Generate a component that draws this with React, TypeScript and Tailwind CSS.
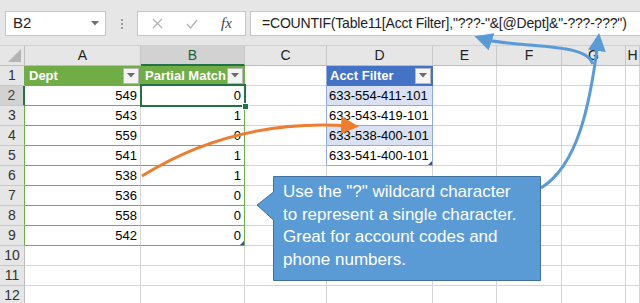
const widths = ["w-[25px]", "w-[116px]", "w-[104px]", "w-[82px]", "w-[106px]", "w-[64px]", "w-[65px]", "w-[64px]", "w-[14px]"];
const letters = ["", "A", "B", "C", "D", "E", "F", "G", "H"];

const dept = [549, 543, 559, 541, 538, 536, 558, 542];
const match = [0, 1, 0, 1, 1, 0, 0, 0];
const acct = ["633-554-411-101", "633-543-419-101", "633-538-400-101", "633-541-400-101"];

function FilterBtn() {
  return (
    <span className="flex items-center justify-center w-[16px] h-[16px] bg-[#f4f4f4] border border-[#b8b8b8] shrink-0">
      <svg width="8" height="5" viewBox="0 0 8 5">
        <path d="M0 0h8L4 4.5z" fill="#6b6b6b" />
      </svg>
    </span>
  );
}

function HeaderRow() {
  return (
    <div className="flex h-[20px]">
      {letters.map((l, i) => {
        if (i === 0)
          return (
            <div key={i} className={`${widths[0]} shrink-0 h-[20px] bg-[#e6e6e6] border-r border-b border-[#bdbdbd] flex items-end justify-end p-[3px]`}>
              <svg width="13" height="13" viewBox="0 0 13 13">
                <path d="M13 0V13H0z" fill="#b4b4b4" />
              </svg>
            </div>
          );
        const sel = i === 2;
        return (
          <div
            key={i}
            className={`${widths[i]} shrink-0 h-[20px] border-r border-[#c8c8c8] text-center text-[14px] leading-[19px] ${
              sel ? "bg-[#d2d2d2] border-b-2 border-b-[#217346] text-[#1e5c38]" : "bg-[#e6e6e6] border-b border-b-[#bdbdbd] text-[#222]"
            }`}
          >
            {l}
          </div>
        );
      })}
    </div>
  );
}

function Row({ r }: { r: number }) {
  const inTable = r >= 1 && r <= 9;
  const inD = r >= 1 && r <= 5;
  const d = r - 2;

  let aCls = "border-r-[#d4d4d4] border-b-[#d4d4d4]";
  let bCls = "border-r-[#d4d4d4] border-b-[#d4d4d4]";
  let dCls = "border-r-[#d4d4d4] border-b-[#d4d4d4]";
  let cCls = "border-r-[#d4d4d4] border-b-[#d4d4d4]";
  if (r === 1) {
    aCls = "bg-[#70ad47] border-r-[#70ad47] border-b-[#70ad47]";
    bCls = "bg-[#70ad47] border-r-[#70ad47] border-b-[#70ad47]";
    dCls = "bg-[#4472c4] border-r-[#4472c4] border-b-[#4472c4]";
  } else if (inTable) {
    aCls = "border-r-[#d4d4d4] border-b-[#70ad47]";
    bCls = "border-r-[#70ad47] border-b-[#70ad47]";
  }
  if (inD) {
    cCls = "border-r-[#8ea9db] border-b-[#d4d4d4]";
    if (r > 1) dCls = `border-r-[#8ea9db] border-b-[#8ea9db] ${r % 2 === 0 ? "bg-[#d9e1f2]" : "bg-white"}`;
  }

  const hdrSel = r === 2;
  const hdrCls = hdrSel
    ? "bg-[#d2d2d2] border-r-2 border-r-[#217346] text-[#444]"
    : inTable
    ? "bg-[#e6e6e6] border-r border-r-[#70ad47] text-[#333]"
    : "bg-[#e6e6e6] border-r border-r-[#bdbdbd] text-[#333]";

  return (
    <div className="flex h-[20px]">
      <div className={`${widths[0]} shrink-0 h-[20px] border-b border-b-[#c8c8c8] text-center text-[14px] leading-[19px] ${hdrCls}`}>{r}</div>
      <div className={`${widths[1]} shrink-0 h-[20px] border-r border-b text-[13px] leading-[19px] px-[3px] ${aCls} ${r === 1 ? "flex items-center justify-between text-white font-bold pl-[4px] pr-[1px]" : "text-right text-black"}`}>
        {r === 1 ? (
          <>
            <span>Dept</span>
            <FilterBtn />
          </>
        ) : inTable ? (
          dept[d]
        ) : null}
      </div>
      <div className={`${widths[2]} shrink-0 h-[20px] border-r border-b text-[13px] leading-[19px] px-[3px] relative ${bCls} ${r === 1 ? "flex items-center justify-between text-white font-bold pl-[4px] pr-[1px]" : "text-right text-black"}`}>
        {r === 1 ? (
          <>
            <span>Partial Match</span>
            <FilterBtn />
          </>
        ) : inTable ? (
          match[d]
        ) : null}
        {r === 9 && <span className="absolute right-0 bottom-0 w-0 h-0 border-l-[4px] border-l-transparent border-b-[4px] border-b-[#2f5597]" />}
      </div>
      <div className={`${widths[3]} shrink-0 h-[20px] border-r border-b ${cCls}`} />
      <div className={`${widths[4]} shrink-0 h-[20px] border-r border-b text-[13px] leading-[19px] px-[2px] relative ${dCls} ${r === 1 ? "flex items-center justify-between text-white font-bold pl-[3px] pr-[1px]" : "text-black"}`}>
        {r === 1 ? (
          <>
            <span>Acct Filter</span>
            <FilterBtn />
          </>
        ) : inD ? (
          acct[d]
        ) : null}
        {r === 5 && <span className="absolute right-0 bottom-0 w-0 h-0 border-l-[4px] border-l-transparent border-b-[4px] border-b-[#2f5597]" />}
      </div>
      {[5, 6, 7, 8].map((i) => (
        <div key={i} className={`${widths[i]} shrink-0 h-[20px] border-r border-b border-[#d4d4d4]`} />
      ))}
    </div>
  );
}

export default function App() {
  return (
    <div className="relative w-[640px] h-[303px] overflow-hidden bg-white" style={{ fontFamily: '"Liberation Sans", Arial, sans-serif' }}>
      {/* formula bar */}
      <div className="flex items-start h-[46px] bg-[#e6e6e6] border-b border-[#d0d0d0]">
        <div className="ml-[5px] mt-[11px] w-[101px] h-[25px] bg-white border border-[#c6c6c6] flex items-center justify-between pl-[7px] pr-[6px]">
          <span className="text-[15px] text-[#222]">B2</span>
          <svg width="8" height="5" viewBox="0 0 8 5">
            <path d="M0 0h8L4 4.5z" fill="#6f6f6f" />
          </svg>
        </div>
        <div className="w-[31px] h-[46px] flex flex-col items-center justify-center gap-[2px] pt-[1px]">
          <span className="w-[2px] h-[2px] bg-[#9a9a9a]" />
          <span className="w-[2px] h-[2px] bg-[#9a9a9a]" />
          <span className="w-[2px] h-[2px] bg-[#9a9a9a]" />
        </div>
        <div className="mt-[11px] w-[109px] h-[25px] bg-white border border-[#c6c6c6] flex items-center">
          <svg className="ml-[14px]" width="11" height="11" viewBox="0 0 11 11">
            <path d="M1 1l9 9M10 1l-9 9" stroke="#b3b3b3" strokeWidth="1.3" fill="none" />
          </svg>
          <svg className="ml-[23px]" width="12" height="10" viewBox="0 0 12 10">
            <path d="M1 5l3.5 4L11 1" stroke="#b3b3b3" strokeWidth="1.3" fill="none" />
          </svg>
          <span className="ml-[23px] text-[15px] italic text-[#444]" style={{ fontFamily: '"Liberation Serif", serif' }}>
            fx
          </span>
        </div>
        <div className="ml-[4px] mt-[11px] flex-1 h-[25px] bg-white border border-[#c6c6c6] border-r-0 flex items-center pl-[11px] whitespace-nowrap overflow-hidden">
          <span className="text-[14px] text-[#222] tracking-[-0.2px]">=COUNTIF(Table11[Acct Filter],"???-"&amp;[@Dept]&amp;"-???-???")</span>
        </div>
      </div>

      {/* grid */}
      <HeaderRow />
      {Array.from({ length: 12 }, (_, i) => (
        <Row key={i} r={i + 1} />
      ))}

      {/* active cell */}
      <div className="absolute left-[140px] top-[84px] w-[106px] h-[23px] border-2 border-[#217346]" />
      <div className="absolute left-[242px] top-[103px] w-[7px] h-[7px] bg-[#217346] border border-white" />

      {/* arrows and callout */}
      <svg className="absolute left-0 top-0 pointer-events-none" width="640" height="303" viewBox="0 0 640 303">
        <defs>
          <marker id="ao" markerWidth="6" markerHeight="6" refX="3" refY="3" orient="auto" markerUnits="strokeWidth">
            <path d="M0 0L6 3L0 6z" fill="#ed7d31" />
          </marker>
          <marker id="ab" markerWidth="6" markerHeight="6" refX="3" refY="3" orient="auto" markerUnits="strokeWidth">
            <path d="M0 0L6 3L0 6z" fill="#5b9bd5" />
          </marker>
        </defs>
        <path d="M142 176 Q 235 118 350 126" stroke="#ed7d31" strokeWidth="3" fill="none" markerEnd="url(#ao)" />
        <path d="M541 188 C 578 165 590 105 598 42" stroke="#5b9bd5" strokeWidth="3" fill="none" markerEnd="url(#ab)" />
        <path d="M593 64 C 588 50 565 48 530 45 C 505 43 492 42 483 39" stroke="#5b9bd5" strokeWidth="3" fill="none" markerEnd="url(#ab)" />
        <path d="M273.5 176.5 H540.5 V280.5 H273.5 V220 L257 205 L273.5 192 Z" fill="#5b9bd5" stroke="#41719c" strokeWidth="1" />
      </svg>
      <div className="absolute left-[283px] top-[181px] w-[236px] text-[17px] leading-[22.7px] text-white">
        Use the "?" wildcard character to represent a single character. Great for account codes and phone numbers.
      </div>
    </div>
  );
}
